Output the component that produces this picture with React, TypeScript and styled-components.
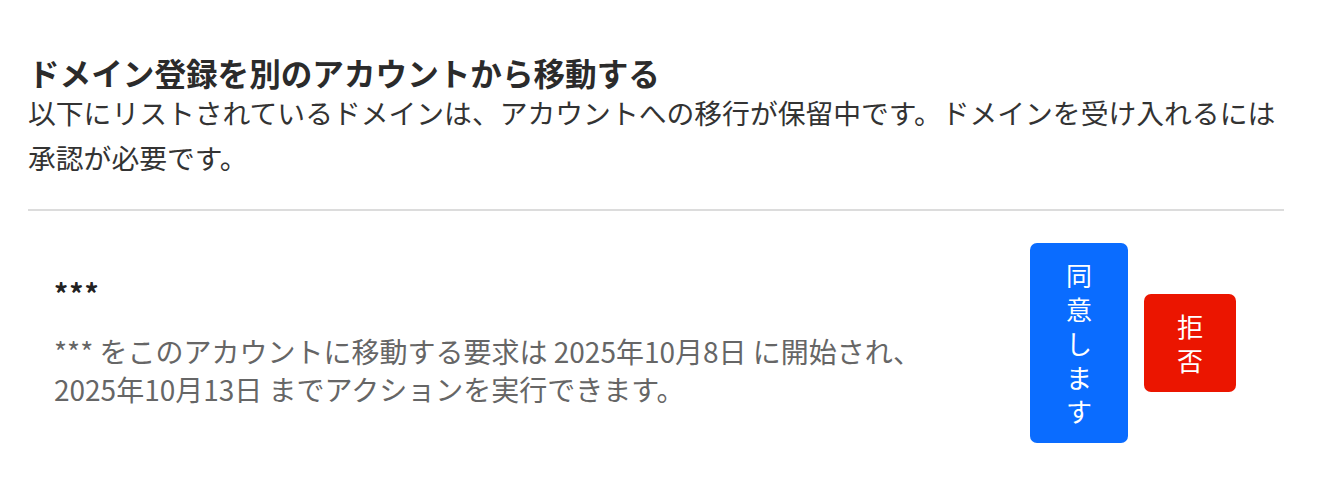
import React from "react";
import styled, { createGlobalStyle } from "styled-components";

const GlobalStyle = createGlobalStyle`
  body {
    margin: 0;
    background: #ffffff;
    font-family: "Noto Sans CJK JP", "Noto Sans", sans-serif;
  }
`;

const Page = styled.div`
  padding: 54px 44px 0 28px;
`;

const Header = styled.div`
  padding-bottom: 29px;
  border-bottom: 2px solid #dcdcdc;
`;

const Title = styled.h2`
  margin: 0;
  font-size: 31.6px;
  line-height: 36px;
  font-weight: 700;
  color: #2b2b2b;
`;

const Lead = styled.p`
  margin: 0;
  font-size: 27.8px;
  line-height: 45px;
  color: #333333;
`;

const Row = styled.div`
  display: flex;
  align-items: center;
  padding: 32px 48px 0 26px;
`;

const Info = styled.div`
  flex: 1;
`;

const DomainName = styled.div`
  font-size: 28px;
  line-height: 30px;
  font-weight: 700;
  letter-spacing: 1px;
  color: #222222;
  margin-bottom: 24px;
`;

const Detail = styled.p`
  margin: 0;
  font-size: 28px;
  line-height: 38px;
  color: #666666;
`;

const Actions = styled.div`
  display: flex;
  align-items: center;
  gap: 16px;
`;

const ActionButton = styled.button<{ $tone: "accept" | "reject"; $width: number }>`
  width: ${(p) => p.$width}px;
  padding: 15px 24px;
  border: none;
  border-radius: 7px;
  background: ${(p) => (p.$tone === "accept" ? "#0a6cff" : "#eb1500")};
  color: #ffffff;
  font-family: "Noto Sans CJK JP", sans-serif;
  font-size: 26px;
  line-height: 34px;
  text-align: center;
  cursor: pointer;
`;

export default function App() {
  return (
    <>
      <GlobalStyle />
      <Page>
        <Header>
          <Title>ドメイン登録を別のアカウントから移動する</Title>
          <Lead>
            以下にリストされているドメインは、アカウントへの移行が保留中です。ドメインを受け入れるには承認が必要です。
          </Lead>
        </Header>
        <Row>
          <Info>
            <DomainName>***</DomainName>
            <Detail>
              *** をこのアカウントに移動する要求は 2025年10月8日 に開始され、
              <br />
              2025年10月13日 までアクションを実行できます。
            </Detail>
          </Info>
          <Actions>
            <ActionButton $tone="accept" $width={98}>
              同意します
            </ActionButton>
            <ActionButton $tone="reject" $width={92}>
              拒否
            </ActionButton>
          </Actions>
        </Row>
      </Page>
    </>
  );
}
